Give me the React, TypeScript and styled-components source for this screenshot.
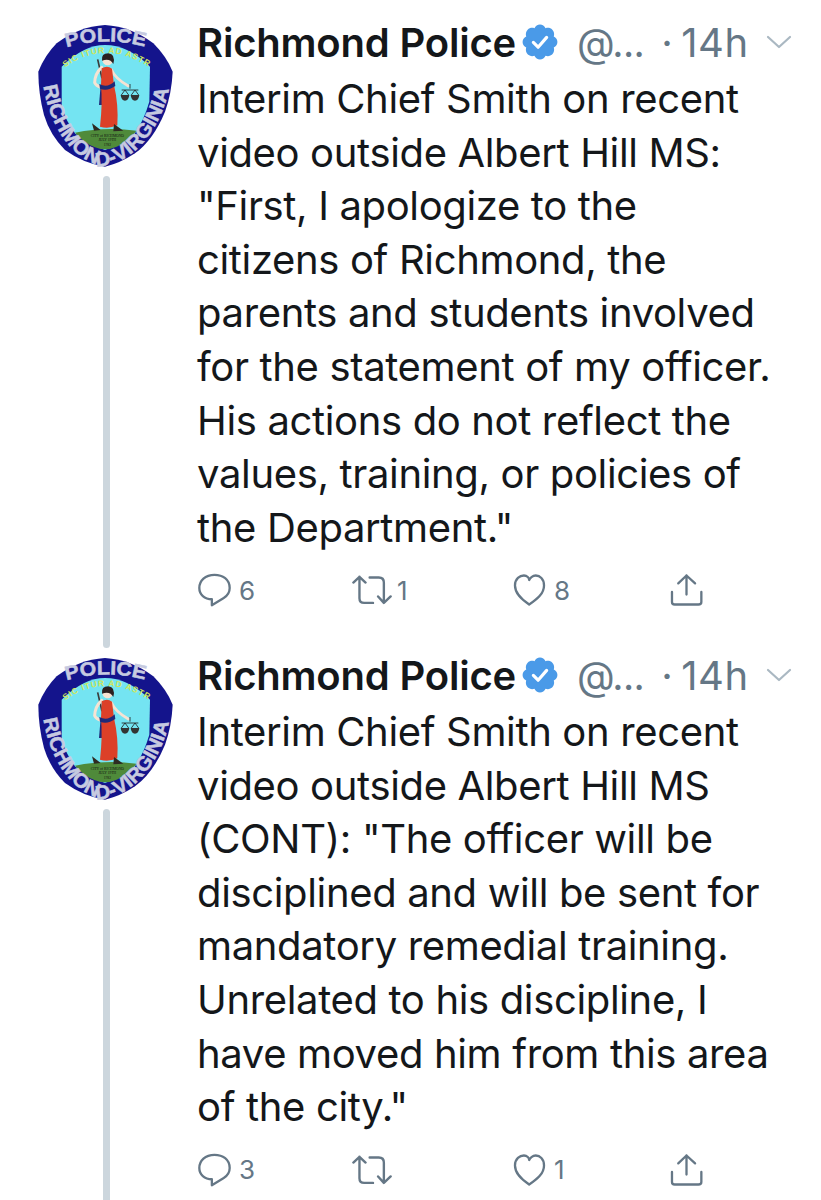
import React from "react";
import styled, { createGlobalStyle } from "styled-components";

const Global = createGlobalStyle`
  html, body { margin: 0; padding: 0; background: #fff; }
  body { font-family: Inter, "Liberation Sans", sans-serif; width: 821px; height: 1200px; overflow: hidden; }
`;
const Page = styled.div`width: 821px; height: 1200px; overflow: hidden; background: #fff;`;
const Tweet = styled.article<{ $h: number }>`
  display: grid; grid-template-columns: 197px 1fr; height: ${p => p.$h}px;
`;
const Rail = styled.div`display: flex; flex-direction: column; align-items: flex-start; padding-left: 20px; padding-top: 10px;`;
const LogoSvg = styled.svg`width: 180px; height: 180px; display: block; flex: none; margin-bottom: -14px;`;
const ThreadLine = styled.div`
  flex: 1; width: 7px; margin-left: 83px; background: #ccd6dd; border-radius: 4px; margin-bottom: -15px;
`;
const Main = styled.div`padding-top: 18px; min-width: 0;`;
const Header = styled.header`display: flex; align-items: center; height: 48px; white-space: nowrap;`;
const Name = styled.span`font-size: 40px; font-weight: 600; color: #14171a; letter-spacing: -0.2px;`;
const Badge = styled.svg`width: 38px; height: 38px; margin-left: 5px; flex: none;`;
const Handle = styled.span`font-size: 39px; color: #657786; margin-left: 18px; letter-spacing: -0.6px;`;
const Time = styled.span`font-size: 40px; color: #657786; margin-left: 17px; letter-spacing: 0.5px;`;
const Dot = styled.span`margin-right: 8px;`;
const Chevron = styled.svg`width: 26px; height: 16px; margin-left: 17px; flex: none;`;
const Body = styled.p`
  margin: 6px 0 0; font-size: 40px; line-height: 53.6px; color: #14171a; letter-spacing: -0.35px; white-space: pre-line;
`;
const Actions = styled.div`display: grid; grid-template-columns: 154px 161px 157px 40px; margin-top: 19px; padding-left: 1px; height: 34px;`;
const Action = styled.div<{ $gap?: number }>`
  display: flex; align-items: center; gap: ${p => p.$gap ?? 8}px; color: #657786; font-size: 26px;
`;
const Icon = styled.svg<{ $w: number }>`
  width: ${p => p.$w}px; height: 34px; flex: none; fill: none; stroke: #657786; stroke-width: 7; stroke-linecap: round; stroke-linejoin: round;
`;

const Logo = ({ id }: { id: string }) => (
  <LogoSvg viewBox="0 0 540 540">
    <defs>
      <path id={`${id}p`} d="M140 112 Q255 78 375 110" />
      <path id={`${id}r`} d="M70 228 C88 340 150 450 250 468 C345 455 425 350 447 235" />
      <path id={`${id}s`} d="M135 172 Q255 86 388 172" />
    </defs>
    <path d="M255 45 Q335 50 400 100 Q440 140 458 185 Q455 250 435 305 Q400 390 345 430 Q300 460 255 470 Q190 460 135 420 Q90 375 72 315 Q55 250 55 185 Q75 135 110 100 Q175 50 255 45Z" fill="#14148c" />
    <path d="M125 170 Q190 105 255 105 Q325 105 390 170 L388 275 Q372 330 345 370 Q300 405 255 420 Q205 405 165 370 Q135 330 125 285Z" fill="#74e4f2" />
    <path d="M165 368 Q255 350 350 362 Q325 395 290 410 Q255 425 225 412 Q190 398 165 368Z" fill="#4f8a3a" />
    <text fontFamily="'Liberation Sans',sans-serif" fontWeight="700" fontSize="58" fill="#c6cae0" stroke="#c6cae0" strokeWidth="1.5">
      <textPath href={`#${id}p`} textLength="238" lengthAdjust="spacingAndGlyphs">POLICE</textPath>
    </text>
    <text fontFamily="'Liberation Sans',sans-serif" fontWeight="700" fontSize="60" fill="#c6cae0" stroke="#c6cae0" strokeWidth="1.5">
      <textPath href={`#${id}r`} textLength="640" lengthAdjust="spacingAndGlyphs">RICHMOND-VIRGINIA</textPath>
    </text>
    <text fontFamily="'Liberation Sans',sans-serif" fontWeight="700" fontSize="25" fill="#d2e65a">
      <textPath href={`#${id}s`} textLength="288">SIC ITUR AD ASTRA</textPath>
    </text>
    <path d="M233 148 L246 205" stroke="#3a3a3a" strokeWidth="5" />
    <path d="M245 172 Q225 190 224 218 Q228 228 245 233" fill="none" stroke="#f6e3d3" strokeWidth="9" strokeLinecap="round" />
    <path d="M275 180 Q285 205 325 228" fill="none" stroke="#f6e3d3" strokeWidth="8" strokeLinecap="round" />
    <path d="M242 225 L237 285 L252 285 L258 230Z" fill="#1e2a78" />
    <path d="M245 175 Q262 165 276 176 L282 225 Q296 285 292 346 Q265 358 240 350 Q248 280 243 225Z" fill="#dc4028" />
    <path d="M238 222 Q262 236 284 214 L286 228 Q262 245 240 236Z" fill="#1e2a78" />
    <circle cx="263" cy="150" r="16" fill="#f6e3d3" />
    <path d="M246 152 Q243 130 265 130 Q287 132 280 162 Q270 143 246 152Z" fill="#2b2020" />
    <path d="M330 222 V236 M305 240 H355 M315 240 L304 255 M315 240 L326 255 M345 240 L334 255 M345 240 L356 255" stroke="#222" strokeWidth="2.500" fill="none" />
    <path d="M302 255 H328 Q326 272 315 272 Q304 272 302 255Z M332 255 H358 Q356 272 345 272 Q334 272 332 255Z" fill="#333" />
    <path d="M216 340 L242 360 L222 362Z M282 342 L310 362 L280 364Z" fill="#2d2a22" />
    <text x="262" y="381" textAnchor="middle" fontFamily="'Liberation Serif',serif" fontSize="11" fill="#111">CITY of RICHMOND</text>
    <text x="262" y="394" textAnchor="middle" fontFamily="'Liberation Serif',serif" fontSize="11" fill="#111">JULY 19TH</text>
    <text x="262" y="407" textAnchor="middle" fontFamily="'Liberation Serif',serif" fontSize="11" fill="#111">1782</text>
  </LogoSvg>
);

const VerifiedBadge = () => (
  <Badge viewBox="0 0 24 24">
    <path fill="#4a9ae8" d="M23 12c0-1.500-.9-2.900-2.300-3.500.5-1.500.2-3.100-.9-4.300-1.100-1.100-2.800-1.400-4.300-.9C14.900 1.900 13.500 1 12 1s-2.900.9-3.500 2.300c-1.500-.5-3.200-.2-4.300.9-1.100 1.200-1.400 2.800-.9 4.300C1.900 9.100 1 10.500 1 12s.9 2.900 2.300 3.500c-.5 1.500-.2 3.100.9 4.300 1.100 1.100 2.800 1.400 4.300.9.6 1.400 2 2.300 3.500 2.300s2.900-.9 3.500-2.300c1.500.5 3.200.2 4.300-.9 1.100-1.200 1.400-2.800.9-4.300 1.400-.6 2.300-2 2.300-3.500z" />
    <path d="M7.800 12.300l3 3 5.400-6.200" fill="none" stroke="#fff" strokeWidth="2" strokeLinecap="round" strokeLinejoin="round" />
  </Badge>
);

const Reply = () => (
  <Icon $w={33} viewBox="50 44 100 100">
    <path d="M100 48 C125 48 146 62 146 88 C146 100 138 112 128 118 L92 140 V122 C70 122 54 108 54 88 C54 66 72 48 100 48Z" />
  </Icon>
);
const Retweet = () => (
  <Icon $w={40} viewBox="496 44 118 100">
    <path d="M500 72 L518 55 L536 72 M518 55 V118 Q518 132 532 132 H558 M548 57 H575 Q590 57 590 72 V130 M573 113 L590 132 L610 113" />
  </Icon>
);
const Heart = () => (
  <Icon $w={33} viewBox="959 44 100 100">
    <path d="M1008 138 C985 122 965 105 965 80 C965 60 980 50 992 50 C1002 50 1008 58 1008 64 C1010 58 1018 50 1028 50 C1040 50 1053 60 1053 80 C1053 105 1032 122 1008 138Z" />
  </Icon>
);
const Share = () => (
  <Icon $w={33} viewBox="1412 44 100 100">
    <path d="M1462 50 V108 M1437 74 L1462 50 L1488 74 M1418 100 V130 Q1418 138 1426 138 H1498 Q1507 138 1507 130 V100" />
  </Icon>
);

type T = { h: number; id: string; text: string; c: [string, string, string] };
const tweets: T[] = [
  {
    h: 633, id: "a",
    text: `Interim Chief Smith on recent
video outside Albert Hill MS:
"First, I apologize to the
citizens of Richmond, the
parents and students involved
for the statement of my officer.
His actions do not reflect the
values, training, or policies of
the Department."`,
    c: ["6", "1", "8"],
  },
  {
    h: 567, id: "b",
    text: `Interim Chief Smith on recent
video outside Albert Hill MS
(CONT): "The officer will be
disciplined and will be sent for
mandatory remedial training.
Unrelated to his discipline, I
have moved him from this area
of the city."`,
    c: ["3", "", "1"],
  },
];

export default function App() {
  return (
    <Page>
      <Global />
      {tweets.map(t => (
        <Tweet key={t.id} $h={t.h}>
          <Rail>
            <Logo id={t.id} />
            <ThreadLine />
          </Rail>
          <Main>
            <Header>
              <Name>Richmond Police</Name>
              <VerifiedBadge />
              <Handle>@...</Handle>
              <Time><Dot>·</Dot>14h</Time>
              <Chevron viewBox="0 0 26 16">
                <path d="M2 3 L13 13 L24 3" fill="none" stroke="#aab8c2" strokeWidth="2.200" strokeLinecap="round" strokeLinejoin="round" />
              </Chevron>
            </Header>
            <Body>{t.text}</Body>
            <Actions>
              <Action><Reply />{t.c[0]}</Action>
              <Action $gap={5}><Retweet />{t.c[1]}</Action>
              <Action><Heart />{t.c[2]}</Action>
              <Action><Share /></Action>
            </Actions>
          </Main>
        </Tweet>
      ))}
    </Page>
  );
}
